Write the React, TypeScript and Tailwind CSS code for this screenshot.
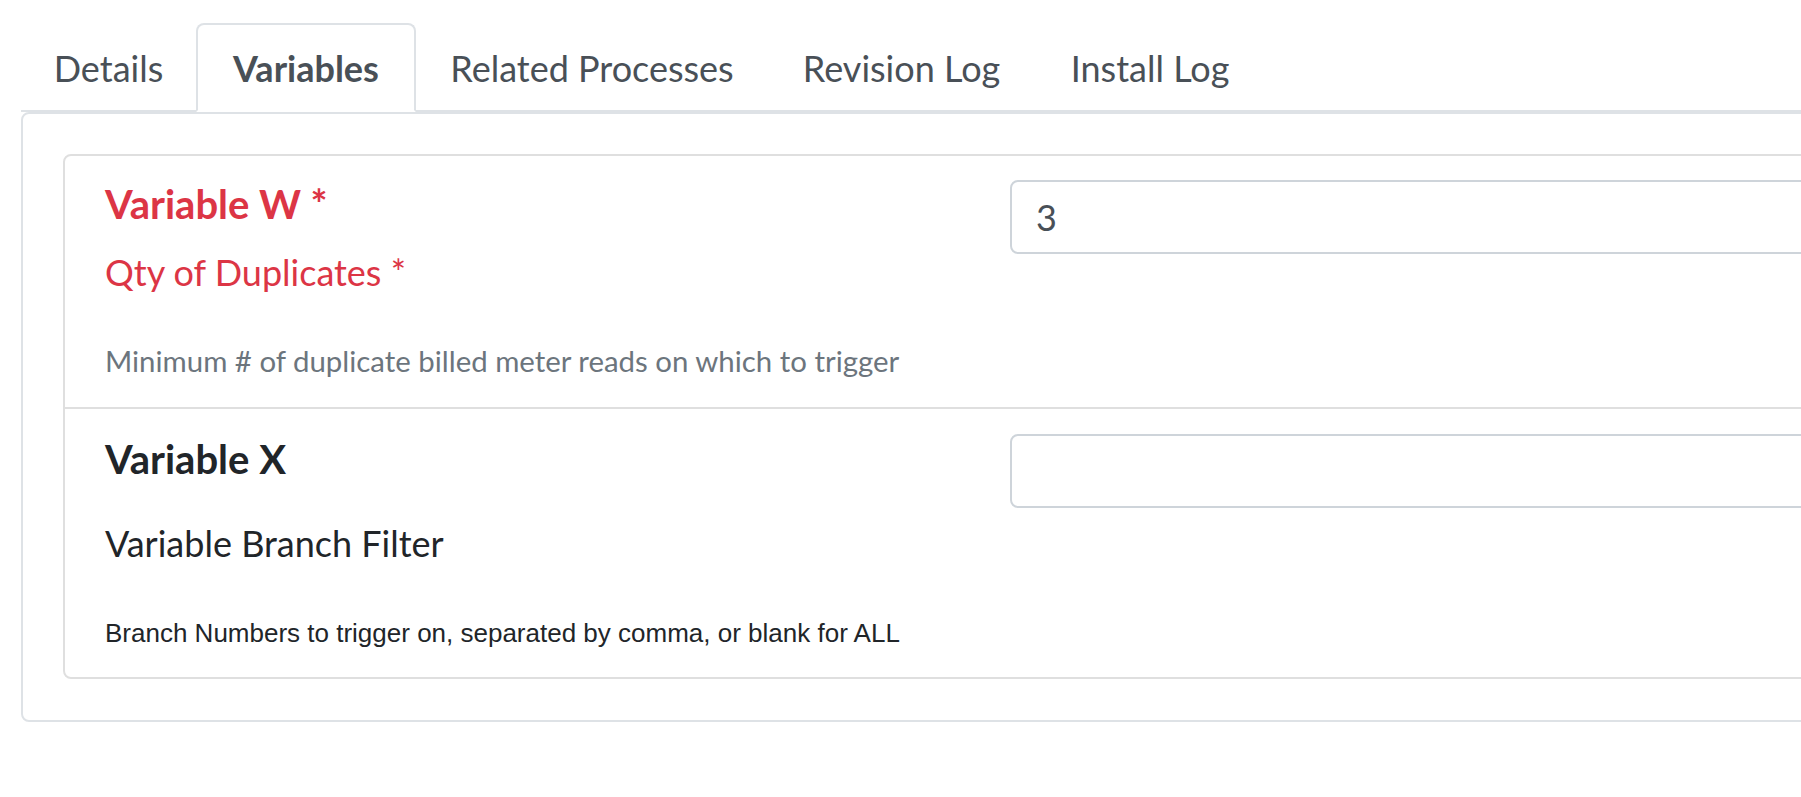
import React from "react";

const tabs = [
  { t: "Details", w: "w-[175px]" },
  { t: "Variables", w: "w-[220px]" },
  { t: "Related Processes", w: "w-[352px]" },
  { t: "Revision Log", w: "w-[267px]" },
  { t: "Install Log", w: "w-[230px]" },
];

export default function App() {
  return (
    <div className="w-full h-[797px] bg-white overflow-hidden" style={{ fontFamily: "Lato, 'Open Sans', sans-serif" }}>
      <div className="w-[2100px] pl-[21px] pt-[23px]">
        <div className="flex border-b-2 border-[#dee2e6]">
          {tabs.map(({ t, w }) => {
            const active = t === "Variables";
            return (
              <div
                key={t}
                className={
                  active
                    ? `${w} -mb-[2px] flex justify-center border-2 border-[#dee2e6] border-b-white bg-white rounded-t-[8px] pt-[16px] pb-[15px] text-[36px] leading-[54px] font-bold text-[#495057]`
                    : `${w} -mb-[2px] flex justify-center border-2 border-transparent pt-[16px] pb-[15px] text-[36px] leading-[54px] text-[#495057]`
                }
              >
                {t}
              </div>
            );
          })}
        </div>
        <div className="border-2 border-[#dee2e6] rounded-[8px] pt-[40px] pb-[41px] pl-[40px]">
          <div className="border-2 border-[#dfdfdf] rounded-[8px]">
            <div className="flex px-[40px] pt-[24px] pb-[24px]">
              <div className="w-[905px] flex flex-col">
                <div className="text-[40px] leading-[48px] font-bold text-[#dc3545]">Variable W *</div>
                <div className="mt-[17px] text-[36px] leading-[54px] text-[#dc3545]">Qty of Duplicates *</div>
                <div className="mt-[40px] text-[29.4px] leading-[44px] text-[#6c757d]">
                  Minimum # of duplicate billed meter reads on which to trigger
                </div>
              </div>
              <div className="flex-1">
                <div className="h-[74px] border-2 border-[#ced4da] rounded-[8px] pl-[24px] flex items-center text-[36px] leading-[54px] text-[#495057]">
                  3
                </div>
              </div>
            </div>
            <div className="flex border-t-2 border-[#dfdfdf] px-[40px] pt-[26px] pb-[24px]">
              <div className="w-[905px] flex flex-col">
                <div className="text-[40px] leading-[48px] font-bold text-[#212529]">Variable X</div>
                <div className="mt-[33px] text-[36px] leading-[54px] text-[#212529]">Variable Branch Filter</div>
                <div
                  className="mt-[44px] text-[26px] leading-[39px] text-[#212529]"
                  style={{ fontFamily: "'Liberation Sans', Arial, sans-serif" }}
                >
                  Branch Numbers to trigger on, separated by comma, or blank for ALL
                </div>
              </div>
              <div className="flex-1">
                <div className="-mt-[1px] h-[74px] border-2 border-[#ced4da] rounded-[8px]"></div>
              </div>
            </div>
          </div>
        </div>
      </div>
    </div>
  );
}
